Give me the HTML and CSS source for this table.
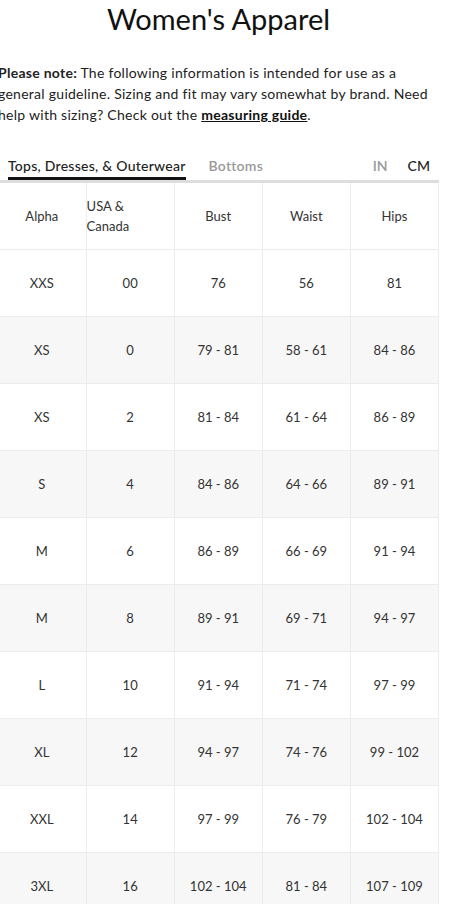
FILE: index.html
```html
<!DOCTYPE html>
<html>
<head>
<meta charset="utf-8">
<link rel="stylesheet" href="styles.css">
</head>
<body>
<div class="page">
  <h1 class="title">Women's Apparel</h1>
  <p class="note"><strong>Please note:</strong> The following information is intended for use as a general guideline. Sizing and fit may vary somewhat by brand. Need help with sizing? Check out the <a class="link" href="#">measuring guide</a>.</p>
  <div class="tabbar">
    <div class="tabs">
      <span class="tab active">Tops, Dresses, &amp; Outerwear</span>
      <span class="tab">Bottoms</span>
    </div>
    <div class="units">
      <span class="unit">IN</span>
      <span class="unit on">CM</span>
    </div>
  </div>
  <table class="chart">
    <thead>
      <tr><th>Alpha</th><th class="left">USA &amp;<br>Canada</th><th>Bust</th><th>Waist</th><th>Hips</th></tr>
    </thead>
    <tbody>
      <tr><td>XXS</td><td>00</td><td>76</td><td>56</td><td>81</td></tr>
      <tr><td>XS</td><td>0</td><td>79 - 81</td><td>58 - 61</td><td>84 - 86</td></tr>
      <tr><td>XS</td><td>2</td><td>81 - 84</td><td>61 - 64</td><td>86 - 89</td></tr>
      <tr><td>S</td><td>4</td><td>84 - 86</td><td>64 - 66</td><td>89 - 91</td></tr>
      <tr><td>M</td><td>6</td><td>86 - 89</td><td>66 - 69</td><td>91 - 94</td></tr>
      <tr><td>M</td><td>8</td><td>89 - 91</td><td>69 - 71</td><td>94 - 97</td></tr>
      <tr><td>L</td><td>10</td><td>91 - 94</td><td>71 - 74</td><td>97 - 99</td></tr>
      <tr><td>XL</td><td>12</td><td>94 - 97</td><td>74 - 76</td><td>99 - 102</td></tr>
      <tr><td>XXL</td><td>14</td><td>97 - 99</td><td>76 - 79</td><td>102 - 104</td></tr>
      <tr><td>3XL</td><td>16</td><td>102 - 104</td><td>81 - 84</td><td>107 - 109</td></tr>
    </tbody>
  </table>
</div>
</body>
</html>
```
FILE: styles.css
```css
html, body {
  margin: 0;
  padding: 0;
  background: #fff;
}
body {
  font-family: "Lato", "Open Sans", sans-serif;
  color: #222;
  overflow: hidden;
}
.page {
  width: 441px;
  margin-left: -2px;
}
.title {
  margin: 0;
  padding-top: 1px;
  text-align: center;
  font-family: "Lato", sans-serif;
  font-weight: 400;
  font-size: 29px;
  line-height: 36px;
  color: #111;
}
.note {
  margin: 25px 0 0 0;
  font-size: 14px;
  line-height: 21px;
  letter-spacing: 0.27px;
  color: #222;
}
.note strong {
  font-weight: 700;
}
.link {
  color: #111;
  font-weight: 700;
  text-decoration: underline;
}
.tabbar {
  display: flex;
  justify-content: space-between;
  align-items: flex-end;
  margin-top: 32px;
  border-bottom: 3px solid #ddd;
  padding-left: 10px;
  padding-right: 9px;
}
.tabs {
  display: flex;
  gap: 23px;
}
.tab {
  font-size: 14px;
  line-height: 18px;
  padding-bottom: 2px;
  font-weight: 600;
  letter-spacing: 0.25px;
  color: #999;
  border-bottom: 3px solid transparent;
}
.tab.active {
  color: #222;
  font-weight: 500;
  border-bottom-color: #111;
}
.units {
  display: flex;
  gap: 20px;
  padding-bottom: 5px;
}
.unit {
  font-size: 14px;
  line-height: 18px;
  font-weight: 600;
  color: #999;
}
.unit.on {
  color: #222;
  font-weight: 500;
}
.chart {
  width: 441px;
  border-collapse: collapse;
  table-layout: fixed;
  font-size: 13px;
  color: #333;
}
.chart th, .chart td {
  height: 66px;
  padding: 0;
  text-align: center;
  vertical-align: middle;
  border: 1px solid #ececec;
  font-weight: 400;
}
.chart tr > :first-child {
  border-left: none;
}
.chart thead th {
  border-top: none;
  line-height: 20px;
  background: #fff;
}
.chart th.left {
  text-align: left;
}
.chart tbody tr:nth-child(even) td {
  background: #f7f7f7;
}
```
